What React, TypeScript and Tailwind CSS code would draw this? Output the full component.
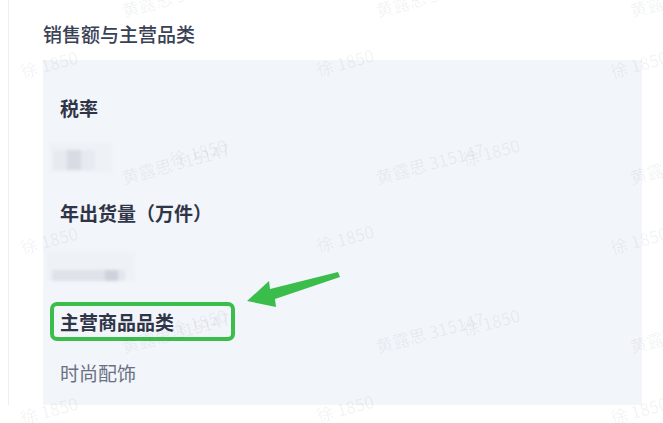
import React from "react";

// watermark tiles (center points)
const marksA = [
  { x: 176, y: -4 }, { x: 430, y: -4 }, { x: 684, y: -4 },
  { x: 176, y: 163 }, { x: 430, y: 163 }, { x: 684, y: 163 },
  { x: 176, y: 332 }, { x: 430, y: 332 }, { x: 684, y: 332 },
];
const marksB = [
  { x: 49, y: 64 }, { x: 345, y: 62 }, { x: 639, y: 64 },
  { x: 198, y: 152 }, { x: 491, y: 152 },
  { x: 49, y: 240 }, { x: 345, y: 238 }, { x: 639, y: 240 },
  { x: 198, y: 322 }, { x: 491, y: 322 },
  { x: 49, y: 410 }, { x: 345, y: 408 }, { x: 639, y: 410 },
];

function Watermarks() {
  return (
    <div className="pointer-events-none absolute inset-0 overflow-hidden text-[17px] text-[#3c465a]/[0.07]">
      {marksA.map((m, i) => (
        <span
          key={"a" + i}
          className="absolute -translate-x-1/2 -translate-y-1/2 -rotate-[15deg] whitespace-nowrap"
          style={{ left: m.x, top: m.y }}
        >
          黄露思 315147
        </span>
      ))}
      {marksB.map((m, i) => (
        <span
          key={"b" + i}
          className="absolute -translate-x-1/2 -translate-y-1/2 -rotate-[15deg] whitespace-nowrap"
          style={{ left: m.x, top: m.y }}
        >
          徐 1850
        </span>
      ))}
    </div>
  );
}

function Arrow() {
  return (
    <svg className="pointer-events-none absolute left-0 top-0" width="663" height="423">
      <polygon
        points="247,301 269,281 270,289 338,272 340,277 275,299 276,307"
        fill="#3bbd4c"
        strokeLinejoin="round"
      />
    </svg>
  );
}

const label = "text-[19px] font-semibold leading-[26px] text-[#2f3547]";

export default function App() {
  return (
    <div
      className="relative h-[423px] w-[663px] overflow-hidden bg-white"
      style={{ fontFamily: '"Noto Sans CJK SC", "Noto Sans", sans-serif' }}
    >
      <div className="ml-[8px] flex h-[405px] flex-col gap-[13px] border-l border-[#eceef2] pl-[34px] pt-[21px]">
        <h2 className="text-[19px] font-medium leading-[26px] text-[#3a4155]">销售额与主营品类</h2>

        <div className="flex h-[345px] w-[599px] flex-col items-start bg-[#f2f5fa] px-[17px] pt-[35px]">
          <div className={label}>税率</div>
          {/* blurred value */}
          <div className="-ml-[10px] mt-[22px] flex h-[29px] w-[62px] bg-[#eef1f5] pl-[3px] pt-[7px] blur-[1.5px]">
            <div className="h-[20px] w-[14px] bg-[#e7eaf0]" />
            <div className="h-[20px] w-[14px] bg-[#d8dbe3]" />
            <div className="h-[20px] w-[14px] bg-[#e7eaf0]" />
          </div>

          <div className={`mt-[28px] ${label}`}>年出货量（万件）</div>
          {/* blurred value */}
          <div className="-ml-[13px] mt-[26px] flex h-[29px] w-[88px] bg-[#eef1f5] pl-[5px] pt-[18px] blur-[1.5px]">
            <div className="h-[11px] w-[53px] bg-[#dfe2e9]" />
            <div className="h-[11px] w-[13px] bg-[#cfd2da]" />
            <div className="h-[11px] w-[7px] bg-[#e3e6ec]" />
          </div>

          <div className={`relative mt-[28px] ${label}`}>
            主营商品品类
            <span className="absolute -left-[10px] -top-[7px] h-[39px] w-[185px] rounded-[7px] border-[4px] border-[#3bbd4c]" />
          </div>
          <div className="mt-[25px] text-[19px] leading-[26px] text-[#6b7183]">时尚配饰</div>
        </div>
      </div>

      <Watermarks />
      <Arrow />
    </div>
  );
}
